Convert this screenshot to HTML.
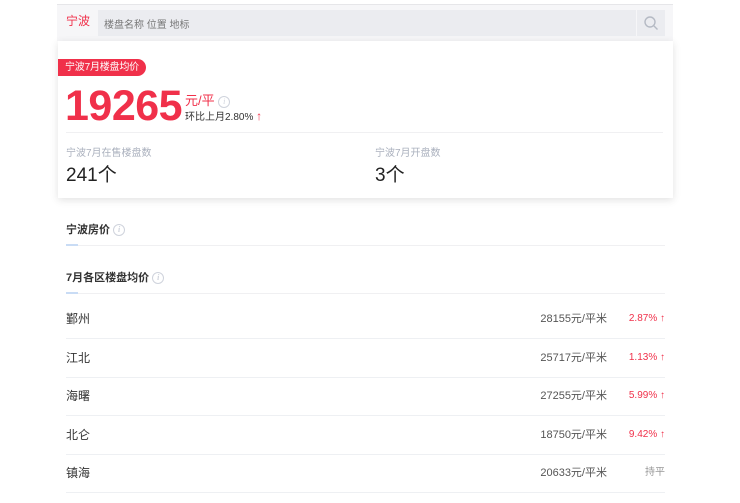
<!DOCTYPE html>
<html><head><meta charset="utf-8"><style>
*{margin:0;padding:0;box-sizing:border-box}
body{width:740px;height:503px;background:#fff;font-family:"Liberation Sans","Noto Sans CJK SC",sans-serif;position:relative;overflow:hidden;color:#333}
.a{position:absolute;white-space:nowrap}
.info{display:inline-block;width:12px;height:12px;border:1px solid #cfd3dc;border-radius:50%;font-size:8px;color:#cfd3dc;text-align:center;line-height:10px;font-style:italic;font-family:"Liberation Serif",serif;vertical-align:middle}
.row{position:absolute;left:66px;width:599px;height:39px;border-bottom:1px solid #eef0f3;font-size:12px;line-height:38px}
.row span{position:absolute;top:0;white-space:nowrap}
.row .n{left:0;color:#333}
.row .p{right:58px;color:#555;font-size:11px}
.row .c{right:0;color:#f0304a;font-size:10px}
</style></head><body>
<div class="a" style="left:57px;top:4px;width:616px;height:37px;background:#f6f6f8;border-top:1px solid #e6e6e9"></div>
<div class="a" style="left:66px;top:12px;font-size:12px;color:#f0304a">宁波</div>
<div class="a" style="left:98px;top:10px;width:538px;height:26px;background:#ebecf0"></div>
<div class="a" style="left:104px;top:16px;font-size:10px;color:#777">楼盘名称 位置 地标</div>
<div class="a" style="left:637px;top:10px;width:28px;height:26px;background:#ebecf0"></div>
<svg class="a" style="left:643px;top:15px" width="16" height="16" viewBox="0 0 16 16"><circle cx="7" cy="7" r="5" fill="none" stroke="#b5bac4" stroke-width="1.4"/><path d="M11 11l3.5 3.5" stroke="#b5bac4" stroke-width="1.4"/></svg>
<div class="a" style="left:58px;top:41px;width:615px;height:157px;background:#fff;box-shadow:0 2px 8px rgba(0,0,0,.12)"></div>
<div class="a" style="left:58px;top:59px;width:88px;height:17px;background:#f0304a;border-radius:0 9px 9px 0;color:#fff;font-size:10px;line-height:17px;padding-left:7px;letter-spacing:-0.2px">宁波7月楼盘均价</div>
<div class="a" style="left:65px;top:82px;font-size:43px;font-weight:bold;color:#f0304a;letter-spacing:-0.5px">19265</div>
<div class="a" style="left:185px;top:90px;font-size:13px;color:#f0304a">元/平 <span class="info">i</span></div>
<div class="a" style="left:185px;top:108px;font-size:10px;color:#333">环比上月2.80% <span style="color:#f0304a;font-size:12px">↑</span></div>
<div class="a" style="left:66px;top:132px;width:597px;height:1px;background:#f0f0f2"></div>
<div class="a" style="left:66px;top:144px;font-size:10px;color:#aab0bd">宁波7月在售楼盘数</div>
<div class="a" style="left:66px;top:160px;font-size:19px;color:#222">241个</div>
<div class="a" style="left:375px;top:144px;font-size:10px;color:#aab0bd">宁波7月开盘数</div>
<div class="a" style="left:375px;top:160px;font-size:19px;color:#222">3个</div>
<div class="a" style="left:66px;top:221px;font-size:11px;font-weight:bold;color:#333">宁波房价 <span class="info">i</span></div>
<div class="a" style="left:66px;top:245px;width:599px;height:1px;background:#f0f0f2"></div>
<div class="a" style="left:66px;top:244px;width:12px;height:2px;background:#c9dcf5"></div>
<div class="a" style="left:66px;top:269px;font-size:11px;font-weight:bold;color:#333">7月各区楼盘均价 <span class="info">i</span></div>
<div class="a" style="left:66px;top:293px;width:599px;height:1px;background:#f0f0f2"></div>
<div class="a" style="left:66px;top:292px;width:12px;height:2px;background:#c9dcf5"></div>
<div class="row" style="top:300px"><span class="n">鄞州</span><span class="p">28155元/平米</span><span class="c">2.87% ↑</span></div>
<div class="row" style="top:339px"><span class="n">江北</span><span class="p">25717元/平米</span><span class="c">1.13% ↑</span></div>
<div class="row" style="top:377px"><span class="n">海曙</span><span class="p">27255元/平米</span><span class="c">5.99% ↑</span></div>
<div class="row" style="top:416px"><span class="n">北仑</span><span class="p">18750元/平米</span><span class="c">9.42% ↑</span></div>
<div class="row" style="top:454px"><span class="n">镇海</span><span class="p">20633元/平米</span><span class="c" style="color:#999">持平</span></div>
</body></html>
